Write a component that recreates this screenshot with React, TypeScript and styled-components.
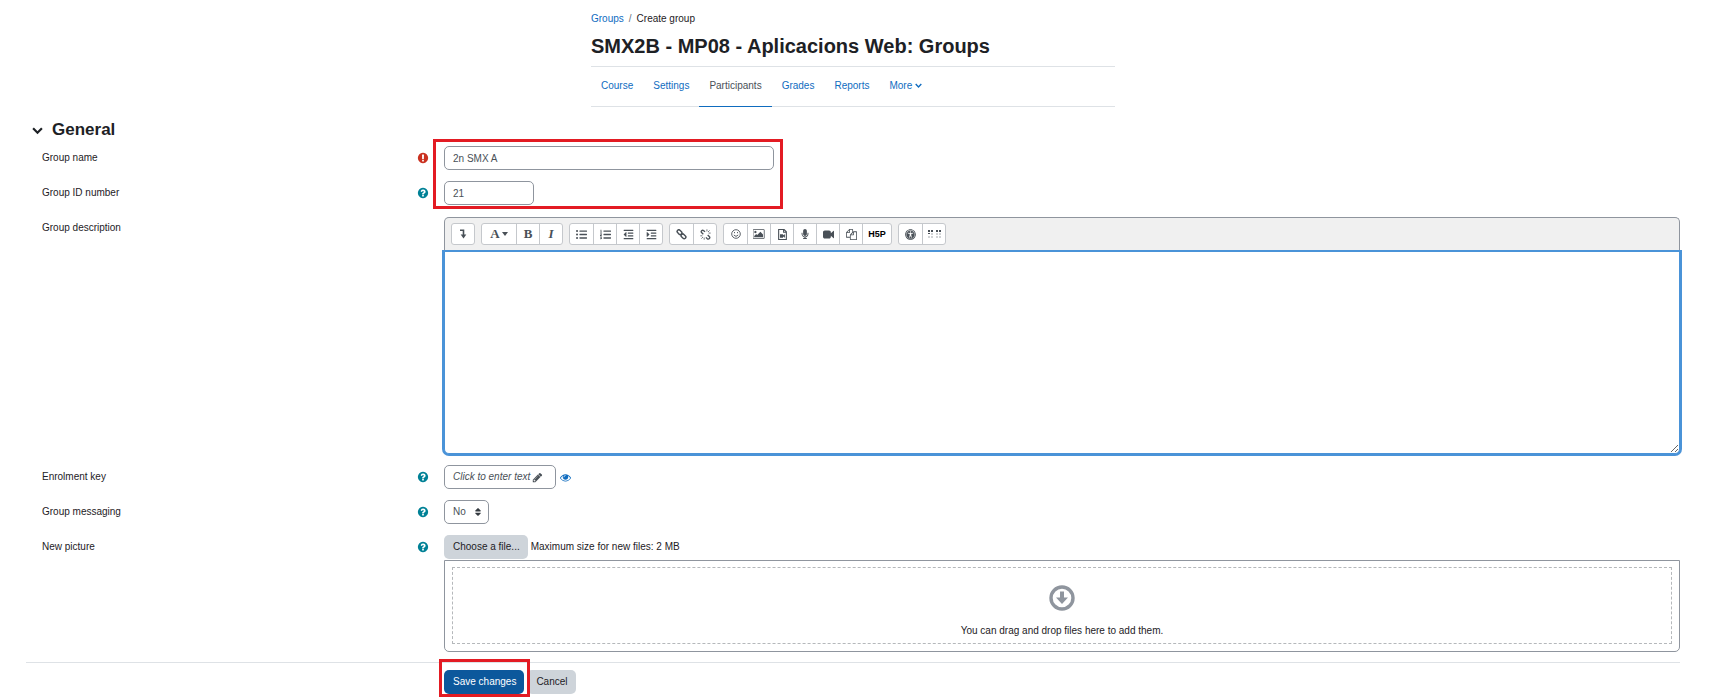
import React from 'react';
import styled, { createGlobalStyle } from 'styled-components';
import { FaMicrophone, FaListUl, FaListOl, FaOutdent, FaIndent, FaSort, FaUniversalAccess } from 'react-icons/fa';

const GlobalStyle = createGlobalStyle`
  *, *::before, *::after { box-sizing: border-box; }
  body {
    margin: 0;
    background: #fff;
    color: #1d2125;
    font-family: "Liberation Sans", Arial, sans-serif;
    font-size: 10px;
    line-height: 16px;
  }
  button, input, select, textarea { font: inherit; color: inherit; margin: 0; }
  a { color: #0f6cbf; text-decoration: none; }
`;

const Page = styled.main`
  padding: 11px 32px 0 26px;
`;

const Header = styled.header`
  max-width: 524px;
  margin: 0 auto;
`;

const Breadcrumb = styled.ol`
  display: flex;
  gap: 5px;
  margin: 0;
  padding: 0;
  list-style: none;
`;

const Slash = styled.li`
  color: #6a737b;
`;

const Title = styled.h1`
  margin: 7px 0 8px;
  font-size: 20px;
  line-height: 24px;
  font-weight: 700;
`;

const Tabs = styled.nav`
  display: flex;
  border-top: 1px solid #dee2e6;
  border-bottom: 1px solid #dee2e6;
`;

const Tab = styled.a<{ $active?: boolean }>`
  display: flex;
  align-items: center;
  gap: 3px;
  height: 40px;
  margin-bottom: -1px;
  padding: 0 10px 2px;
  color: ${p => (p.$active ? '#495057' : '#0f6cbf')};
  border-bottom: 1px solid ${p => (p.$active ? '#0f6cbf' : 'transparent')};
`;

const SectionHeading = styled.h2`
  display: flex;
  align-items: center;
  gap: 9px;
  height: 24px;
  margin: 11px 0 4px;
  font-size: 17px;
  line-height: 24px;
`;

const Toggle = styled.button`
  display: flex;
  padding: 0 0 0 6px;
  border: 0;
  background: none;
`;

const Rows = styled.div`
  display: flex;
  flex-direction: column;
  gap: 11px;
  margin-left: 6px;
`;

const Row = styled.div`
  display: grid;
  grid-template-columns: 25% minmax(0, 1fr);
  align-items: start;
`;

const LabelCell = styled.div`
  display: flex;
  align-items: center;
  justify-content: space-between;
  height: 24px;
  padding: 0 15px 0 10px;
`;

const Marker = styled.button<{ $color: string }>`
  display: flex;
  padding: 0;
  border: 0;
  background: none;
  color: ${p => p.$color};
`;

const Field = styled.div`
  position: relative;
  display: flex;
  flex-wrap: wrap;
  align-items: center;
`;

const TextInput = styled.input<{ $width: number }>`
  width: ${p => p.$width}px;
  height: 24px;
  padding: 0 8px;
  border: 1px solid #8f959e;
  border-radius: 5px;
  background: #fff;
  color: #495057;
`;

const Highlight = styled.span<{ $width: number; $height: number; $inset: number; $top: number }>`
  position: absolute;
  top: -${p => p.$top}px;
  left: -${p => p.$inset}px;
  width: ${p => p.$width}px;
  height: ${p => p.$height}px;
  border: 3px solid #e31b23;
  pointer-events: none;
`;

const Editor = styled.div`
  width: 100%;
  margin-top: 1px;
`;

const Toolbar = styled.div`
  display: flex;
  flex-wrap: wrap;
  gap: 6px;
  padding: 5px 6px 7px;
  border: 1px solid #8f959e;
  border-bottom: 0;
  border-radius: 5px 5px 0 0;
  background: #f0f0f0;
`;

const ToolGroup = styled.div`
  display: flex;
  border: 1px solid #c5c8cc;
  border-radius: 3px;
  background: #fff;
`;

const Tool = styled.button<{ $width?: number }>`
  display: flex;
  align-items: center;
  justify-content: center;
  gap: 2px;
  width: ${p => p.$width ?? 23}px;
  height: 20px;
  padding: 0;
  border: 0;
  background: none;
  color: #495057;
  & + & { border-left: 1px solid #c5c8cc; }
`;

const Letter = styled.span<{ $italic?: boolean }>`
  font-family: "Liberation Serif", "Times New Roman", serif;
  font-size: 13px;
  font-weight: 700;
  font-style: ${p => (p.$italic ? 'italic' : 'normal')};
`;

const Mark = styled.span`
  color: #000;
  font-size: 9px;
  font-weight: 900;
`;

const Description = styled.textarea`
  display: block;
  width: 100%;
  height: 202px;
  padding: 8px;
  border: 1px solid #4a93d8;
  border-top: 0;
  border-radius: 0 0 5px 5px;
  outline: none;
  box-shadow: 0 0 0 2px #4a93d8;
  resize: vertical;
`;

const KeyButton = styled.button`
  display: flex;
  align-items: center;
  gap: 2px;
  width: 112px;
  height: 24px;
  margin-right: 4px;
  padding: 0 8px;
  border: 1px solid #8f959e;
  border-radius: 5px;
  background: #fff;
  color: #495057;
  font-style: italic;
`;

const SelectWrap = styled.span`
  position: relative;
  display: inline-flex;
  color: #343a40;
  & > svg { position: absolute; right: 6px; top: 7px; pointer-events: none; }
`;

const Select = styled.select`
  width: 45px;
  height: 24px;
  padding: 0 8px;
  border: 1px solid #8f959e;
  border-radius: 5px;
  appearance: none;
  background: #fff;
  color: #495057;
`;

const Button = styled.button<{ $primary?: boolean }>`
  height: 24px;
  padding: 0 8px 0 9px;
  border: 0;
  border-radius: 5px;
  background: ${p => (p.$primary ? '#0c589c' : '#ced4da')};
  color: ${p => (p.$primary ? '#fff' : '#1d2125')};
`;

const PickerRow = styled.div`
  display: flex;
  align-items: center;
  gap: 3px;
  margin-bottom: 1px;
`;

const FileArea = styled.div`
  width: 100%;
  padding: 6px 7px 7px;
  border: 1px solid #8f959e;
  border-radius: 0 0 5px 5px;
`;

const DropZone = styled.div`
  display: flex;
  flex-direction: column;
  align-items: center;
  gap: 12px;
  padding: 17px 0 4px;
  border: 1px dashed #b5b8bb;
  color: #1d2125;
`;

const Footer = styled.div`
  margin-top: 10px;
  padding: 7px 0 6px 6px;
  border-top: 1px solid #dee2e6;
`;

const Actions = styled(Field)`
  grid-column: 2;
  gap: 3px;
`;

const Glyph = ({ d, size = 10, box = 1792 }: { d: string; size?: number; box?: number }) => (
  <svg width={size} height={size} viewBox={`0 0 ${box} 1792`} fill="currentColor" aria-hidden="true">
    <path d={d} />
  </svg>
);

const QUESTION =
  'M1024 1376v-192q0-14-9-23t-23-9h-192q-14 0-23 9t-9 23v192q0 14 9 23t23 9h192q14 0 23-9t9-23zm256-672q0-88-55.5-163t-138.5-116-170-41q-243 0-371 213-15 24 8 42l132 100q7 6 19 6 16 0 25-12 53-68 86-92 34-24 86-24 48 0 85.5 26t37.5 59q0 38-20 61t-68 45q-63 28-115.5 86.5t-52.5 125.5v36q0 14 9 23t23 9h192q14 0 23-9t9-23q0-19 21.5-49.5t54.5-49.5q32-18 49-28.5t46-35 44.5-48 28-60.5 12.5-81zm384 192q0 209-103 385.5t-279.5 279.5-385.5 103-385.5-103-279.5-279.5-103-385.5 103-385.5 279.5-279.5 385.5-103 385.5 103 279.5 279.5 103 385.5z';
const EXCLAMATION =
  'M896 128q209 0 385.5 103t279.5 279.5 103 385.5-103 385.5-279.5 279.5-385.5 103-385.5-103-279.5-279.5-103-385.5 103-385.5 279.5-279.5 385.5-103zm128 1247v-190q0-14-9-23.5t-22-9.5h-192q-13 0-23 10t-10 23v190q0 13 10 23t23 10h192q13 0 22-9.5t9-23.5zm-2-344l18-621q0-12-10-18-10-8-24-8h-220q-14 0-24 8-10 6-10 18l17 621q0 10 10 17.5t24 7.5h185q14 0 23.5-7.5t10.5-17.5z';
const PENCIL =
  'M491 1536l91-91-235-235-91 91v107h128v128h107zm523-928q0-22-22-22-10 0-17 7l-542 542q-7 7-7 17 0 22 22 22 10 0 17-7l542-542q7-7 7-17zm-54-192l416 416-832 832h-416v-416zm683 96q0 53-37 90l-166 166-416-416 166-165q36-38 90-38 53 0 91 38l235 234q37 39 37 91z';
const EYE =
  'M1664 960q-152-236-381-353 61 104 61 225 0 185-131.5 316.5t-316.5 131.5-316.5-131.5-131.5-316.5q0-121 61-225-229 117-381 353 133 205 333.5 326.5t434.5 121.5 434.5-121.5 333.5-326.5zm-720-384q0-20-14-34t-34-14q-125 0-214.5 89.5t-89.5 214.5q0 20 14 34t34 14 34-14 14-34q0-86 61-147t147-61q20 0 34-14t14-34zm848 384q0 34-20 69-140 230-376.5 368.5t-499.5 138.5-499.5-139-376.5-368q-20-35-20-69t20-69q140-229 376.5-368t499.5-139 499.5 139 376.5 368q20 35 20 69z';
const CAMERA =
  'M1792 352v1088q0 42-39 59-13 5-25 5-27 0-45-19l-403-403v166q0 119-84.5 203.5t-203.5 84.5h-704q-119 0-203.5-84.5t-84.5-203.5v-704q0-119 84.5-203.5t203.5-84.5h704q119 0 203.5 84.5t84.5 203.5v165l403-402q18-19 45-19 12 0 25 5 39 17 39 59z';
const FILES =
  'M1696 384q40 0 68 28t28 68v1216q0 40-28 68t-68 28h-960q-40 0-68-28t-28-68v-288h-544q-40 0-68-28t-28-68v-672q0-40 20-88t48-76l408-408q28-28 76-48t88-20h416q40 0 68 28t28 68v328q68-40 128-40h416zm-544 213l-299 299h299v-299zm-640-384l-299 299h299v-299zm196 647l316-316v-416h-384v416q0 40-28 68t-68 28h-416v640h512v-256q0-40 20-88t48-76zm956 804v-1152h-384v416q0 40-28 68t-68 28h-416v640h896z';
const PICTURE =
  'M576 576q0 80-56 136t-136 56-136-56-56-136 56-136 136-56 136 56 56 136zm1024 384v448h-1408v-192l320-320 160 160 512-512zm96-704h-1600q-13 0-22.5 9.5t-9.5 22.5v1216q0 13 9.5 22.5t22.5 9.5h1600q13 0 22.5-9.5t9.5-22.5v-1216q0-13-9.5-22.5t-22.5-9.5zm160 32v1216q0 66-47 113t-113 47h-1600q-66 0-113-47t-47-113v-1216q0-66 47-113t113-47h1600q66 0 113 47t47 113z';

const Stroke = ({ size = 10, width = 1, box = 10, children }: { size?: number; width?: number; box?: number; children: React.ReactNode }) => (
  <svg width={size} height={size} viewBox={`0 0 ${box} ${box}`} fill="none" stroke="currentColor" strokeWidth={width} aria-hidden="true">
    {children}
  </svg>
);

const Chevron = ({ size, width }: { size: number; width: number }) => (
  <Stroke size={size} width={width}><path d="M1 3l4 4 4-4" /></Stroke>
);

const Caret = () => (
  <svg width="6" height="4" viewBox="0 0 6 4" fill="currentColor" aria-hidden="true"><path d="M0 0h6L3 4z" /></svg>
);

const Help = ({ about }: { about: string }) => (
  <Marker type="button" $color="#008196" aria-label={`Help with ${about}`}><Glyph d={QUESTION} size={12} /></Marker>
);

const tabs = ['Course', 'Settings', 'Participants', 'Grades', 'Reports'];

export default function App() {
  return (
    <>
      <GlobalStyle />
      <Page>
        <Header>
          <Breadcrumb>
            <li><a href="#groups">Groups</a></li>
            <Slash>/</Slash>
            <li>Create group</li>
          </Breadcrumb>
          <Title>SMX2B - MP08 - Aplicacions Web: Groups</Title>
          <Tabs>
            {tabs.map(tab => (
              <Tab key={tab} href={`#${tab.toLowerCase()}`} $active={tab === 'Participants'}>{tab}</Tab>
            ))}
            <Tab href="#more">More <Chevron size={7} width={2} /></Tab>
          </Tabs>
        </Header>

        <form onSubmit={e => e.preventDefault()}>
          <SectionHeading>
            <Toggle type="button" aria-label="Collapse General"><Chevron size={11} width={2} /></Toggle>
            General
          </SectionHeading>

          <Rows>
            <Row>
              <LabelCell>
                <label htmlFor="name">Group name</label>
                <Marker type="button" $color="#ca3120" aria-label="Required"><Glyph d={EXCLAMATION} size={12} /></Marker>
              </LabelCell>
              <Field>
                <TextInput id="name" $width={330} defaultValue="2n SMX A" />
                <Highlight $top={7} $inset={11} $width={350} $height={70} />
              </Field>
            </Row>
            <Row>
              <LabelCell>
                <label htmlFor="idnumber">Group ID number</label>
                <Help about="Group ID number" />
              </LabelCell>
              <Field><TextInput id="idnumber" $width={90} defaultValue="21" /></Field>
            </Row>
            <Row>
              <LabelCell><label htmlFor="description">Group description</label></LabelCell>
              <Editor>
                <Toolbar>
                  <ToolGroup>
                    <Tool type="button" $width={22} aria-label="Show more buttons">
                      <Stroke width={1.6}><path d="M2 1.3h3.5v5" /><path d="M2.7 5.6h5.6l-2.8 3.8z" fill="currentColor" stroke="none" /></Stroke>
                    </Tool>
                  </ToolGroup>
                  <ToolGroup>
                    <Tool type="button" $width={34} aria-label="Paragraph styles"><Letter>A</Letter><Caret /></Tool>
                    <Tool type="button" aria-label="Bold"><Letter>B</Letter></Tool>
                    <Tool type="button" aria-label="Italic"><Letter $italic>I</Letter></Tool>
                  </ToolGroup>
                  <ToolGroup>
                    <Tool type="button" aria-label="Unordered list"><FaListUl size={11} /></Tool>
                    <Tool type="button" aria-label="Ordered list"><FaListOl size={11} /></Tool>
                    <Tool type="button" aria-label="Outdent"><FaOutdent size={11} /></Tool>
                    <Tool type="button" aria-label="Indent"><FaIndent size={11} /></Tool>
                  </ToolGroup>
                  <ToolGroup>
                    <Tool type="button" aria-label="Link">
                      <Stroke size={11} width={1.3}><rect x="-2.4" y="-1.5" width="4.8" height="3" rx="1.4" transform="translate(3.2 2.9) rotate(45)" /><rect x="-2.4" y="-1.5" width="4.8" height="3" rx="1.4" transform="translate(6.8 6.7) rotate(45)" /></Stroke>
                    </Tool>
                    <Tool type="button" aria-label="Unlink">
                      <Stroke size={11} width={1.2}><path d="M4.6 2.6L3.4 1.5Q2.4.7 1.5 1.6T1.6 3.5L3 4.8M5.4 7.6l1.2 1.2q1 .8 1.9-.1t-.1-1.9L7 5.4" /><path d="M6.3.3v1.9M7.3 2.7L8.7 1.3M7.8 3.7h1.9M.3 6.2h1.9M1.3 8.7l1.4-1.4M3.8 7.8v1.9" strokeWidth=".7" /></Stroke>
                    </Tool>
                  </ToolGroup>
                  <ToolGroup>
                    <Tool type="button" aria-label="Emoji picker">
                      <Stroke width={0.9}><circle cx="5" cy="5" r="4.3" /><path d="M2.8 6q2.2 2.8 4.4 0M3.5 3v1.2M6.5 3v1.2" /></Stroke>
                    </Tool>
                    <Tool type="button" aria-label="Insert image"><Glyph d={PICTURE} size={12} box={1920} /></Tool>
                    <Tool type="button" aria-label="Insert media">
                      <Stroke size={11} width={1}><path d="M1.5.5h5l2 2v7h-7zM6 .5V3h2.5" /><path d="M2.7 4.7h2.8v1l1.7-1v3.2l-1.7-1v1H2.7z" fill="currentColor" stroke="none" /></Stroke>
                    </Tool>
                    <Tool type="button" aria-label="Record audio"><FaMicrophone size={10} /></Tool>
                    <Tool type="button" aria-label="Record video"><Glyph d={CAMERA} size={11} /></Tool>
                    <Tool type="button" aria-label="Manage files"><Glyph d={FILES} size={11} /></Tool>
                    <Tool type="button" $width={29} aria-label="Insert H5P"><Mark>H5P</Mark></Tool>
                  </ToolGroup>
                  <ToolGroup>
                    <Tool type="button" aria-label="Accessibility checker"><FaUniversalAccess size={11} /></Tool>
                    <Tool type="button" aria-label="Screenreader helper">
                      <svg width="13" height="10" viewBox="0 0 13 10" fill="currentColor" aria-hidden="true">
                        <path d="M0 1h2v2H0zM3 1h2v2H3zM8 1h2v2H8zM11 1h2v2h-2zM0 4h2v1H0z" />
                        <path d="M3 4h2v2H3zM8 4h2v2H8zM11 4h2v2h-2zM0 7h2v2H0zM3 7h2v2H3zM8 7h2v2H8zM11 7h2v2h-2z" fillOpacity=".25" />
                      </svg>
                    </Tool>
                  </ToolGroup>
                </Toolbar>
                <Description id="description" />
              </Editor>
            </Row>
            <Row>
              <LabelCell>
                <label htmlFor="key">Enrolment key</label>
                <Help about="Enrolment key" />
              </LabelCell>
              <Field>
                <KeyButton type="button" id="key">Click to enter text <Glyph d={PENCIL} size={11} /></KeyButton>
                <Marker type="button" $color="#0f6cbf" aria-label="Reveal"><Glyph d={EYE} size={11} /></Marker>
              </Field>
            </Row>
            <Row>
              <LabelCell>
                <label htmlFor="messaging">Group messaging</label>
                <Help about="Group messaging" />
              </LabelCell>
              <Field>
                <SelectWrap>
                  <Select id="messaging" defaultValue="No"><option>No</option><option>Yes</option></Select>
                  <FaSort size={10} />
                </SelectWrap>
              </Field>
            </Row>
            <Row>
              <LabelCell>
                <label htmlFor="picture">New picture</label>
                <Help about="New picture" />
              </LabelCell>
              <div>
                <PickerRow>
                  <Button type="button" id="picture">Choose a file...</Button>
                  <span>Maximum size for new files: 2 MB</span>
                </PickerRow>
                <FileArea>
                  <DropZone>
                    <Stroke size={26} width={3.4} box={26}>
                      <circle cx="13" cy="13" r="11" stroke="#8f959e" />
                      <path d="M11 6.5h4v6h4l-6 6.5-6-6.5h4z" fill="#8f959e" stroke="none" />
                    </Stroke>
                    <span>You can drag and drop files here to add them.</span>
                  </DropZone>
                </FileArea>
              </div>
            </Row>
          </Rows>

          <Footer>
            <Row>
              <Actions>
                <Button type="submit" $primary>Save changes</Button>
                <Button type="button">Cancel</Button>
                <Highlight $top={11} $inset={5} $width={91} $height={38} />
              </Actions>
            </Row>
          </Footer>
        </form>
      </Page>
    </>
  );
}
